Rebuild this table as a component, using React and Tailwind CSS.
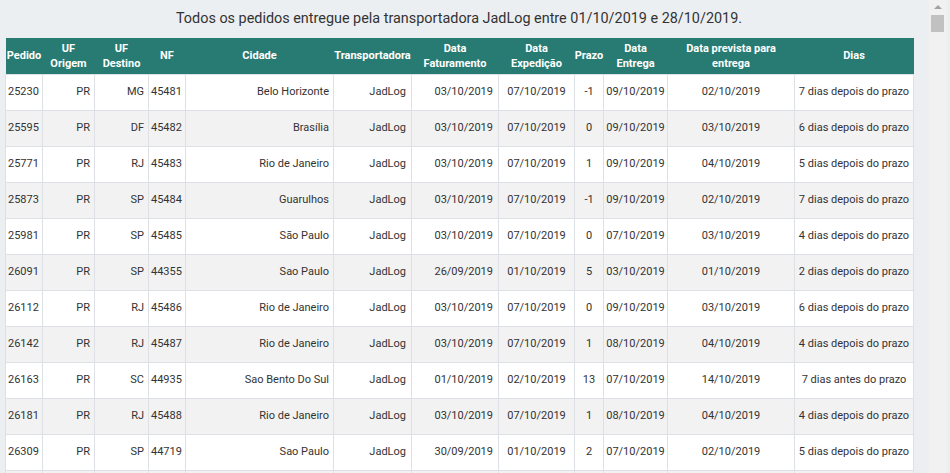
import React from "react";

const rows = [
  ["25230", "PR", "MG", "45481", "Belo Horizonte", "JadLog", "03/10/2019", "07/10/2019", "-1", "09/10/2019", "02/10/2019", "7 dias depois do prazo"],
  ["25595", "PR", "DF", "45482", "Brasília", "JadLog", "03/10/2019", "07/10/2019", "0", "09/10/2019", "03/10/2019", "6 dias depois do prazo"],
  ["25771", "PR", "RJ", "45483", "Rio de Janeiro", "JadLog", "03/10/2019", "07/10/2019", "1", "09/10/2019", "04/10/2019", "5 dias depois do prazo"],
  ["25873", "PR", "SP", "45484", "Guarulhos", "JadLog", "03/10/2019", "07/10/2019", "-1", "09/10/2019", "02/10/2019", "7 dias depois do prazo"],
  ["25981", "PR", "SP", "45485", "São Paulo", "JadLog", "03/10/2019", "07/10/2019", "0", "07/10/2019", "03/10/2019", "4 dias depois do prazo"],
  ["26091", "PR", "SP", "44355", "Sao Paulo", "JadLog", "26/09/2019", "01/10/2019", "5", "03/10/2019", "01/10/2019", "2 dias depois do prazo"],
  ["26112", "PR", "RJ", "45486", "Rio de Janeiro", "JadLog", "03/10/2019", "07/10/2019", "0", "09/10/2019", "03/10/2019", "6 dias depois do prazo"],
  ["26142", "PR", "RJ", "45487", "Rio de Janeiro", "JadLog", "03/10/2019", "07/10/2019", "1", "08/10/2019", "04/10/2019", "4 dias depois do prazo"],
  ["26163", "PR", "SC", "44935", "Sao Bento Do Sul", "JadLog", "01/10/2019", "02/10/2019", "13", "07/10/2019", "14/10/2019", "7 dias antes do prazo"],
  ["26181", "PR", "RJ", "45488", "Rio de Janeiro", "JadLog", "03/10/2019", "07/10/2019", "1", "08/10/2019", "04/10/2019", "4 dias depois do prazo"],
  ["26309", "PR", "SP", "44719", "Sao Paulo", "JadLog", "30/09/2019", "01/10/2019", "2", "07/10/2019", "02/10/2019", "5 dias depois do prazo"],
  ["", "", "", "", "", "", "", "", "", "", "", ""],
];

const headers = [
  ["Pedido"],
  ["UF", "Origem"],
  ["UF", "Destino"],
  ["NF"],
  ["Cidade"],
  ["Transportadora"],
  ["Data", "Faturamento"],
  ["Data", "Expedição"],
  ["Prazo"],
  ["Data", "Entrega"],
  ["Data prevista para", "entrega"],
  ["Dias"],
];

const widths = ["w-[37px]", "w-[52px]", "w-[54px]", "w-[37px]", "w-[148px]", "w-[78px]", "w-[87px]", "w-[76px]", "w-[29px]", "w-[64px]", "w-[127px]", "w-[119px]"];

const aligns = [
  "text-left pl-[2px]",
  "text-right pr-[4px]",
  "text-right pr-[4px]",
  "text-left pl-[2px]",
  "text-right pr-[4px]",
  "text-right pr-[5px]",
  "text-right pr-[5px]",
  "text-center",
  "text-center",
  "text-center",
  "text-center",
  "text-center",
];

export default function App() {
  return (
    <div
      className="h-[473px] w-[950px] overflow-hidden bg-[#eceff1] flex"
      style={{ fontFamily: "Roboto, 'Liberation Sans', sans-serif" }}
    >
      <div className="w-[929px] shrink-0 flex flex-col">
        <div className="h-[38px] shrink-0 flex items-center justify-center text-[14.4px] text-[#333] pl-[5px] pr-[16px] pb-[1px]">
          Todos os pedidos entregue pela transportadora JadLog entre 01/10/2019 e 28/10/2019.
        </div>
        <div className="pl-[5px] shrink-0">
          <table className="table-fixed border-collapse w-[908px] text-[11px] text-[#333]">
            <colgroup>
              {widths.map((w, i) => (
                <col key={i} className={w} />
              ))}
            </colgroup>
            <thead>
              <tr className="h-[36px] bg-[#277b72] text-white">
                {headers.map((h, i) => (
                  <th key={i} className="font-bold text-[11px] leading-[15px] text-center px-0 align-middle whitespace-nowrap">
                    {h.map((l, j) => (
                      <div key={j}>{l}</div>
                    ))}
                  </th>
                ))}
              </tr>
            </thead>
            <tbody>
              {rows.map((r, ri) => (
                <tr key={ri} className={`h-[36px] ${ri % 2 === 1 ? "bg-[#f2f2f2]" : "bg-white"}`}>
                  {r.map((c, ci) => (
                    <td key={ci} className={`border border-[#dde0e4] align-middle whitespace-nowrap overflow-hidden ${aligns[ci]}`}>
                      {c}
                    </td>
                  ))}
                </tr>
              ))}
            </tbody>
          </table>
        </div>
      </div>
      <div className="w-[17px] shrink-0 h-full bg-[#f1f1f1] flex flex-col items-center">
        <div className="mt-[5px] w-0 h-0 border-l-[4px] border-r-[4px] border-b-[4px] border-l-transparent border-r-transparent border-b-[#a3a3a3]" />
        <div className="mt-[6px] w-[13px] h-[17px] bg-[#c1c1c1]" />
      </div>
    </div>
  );
}
